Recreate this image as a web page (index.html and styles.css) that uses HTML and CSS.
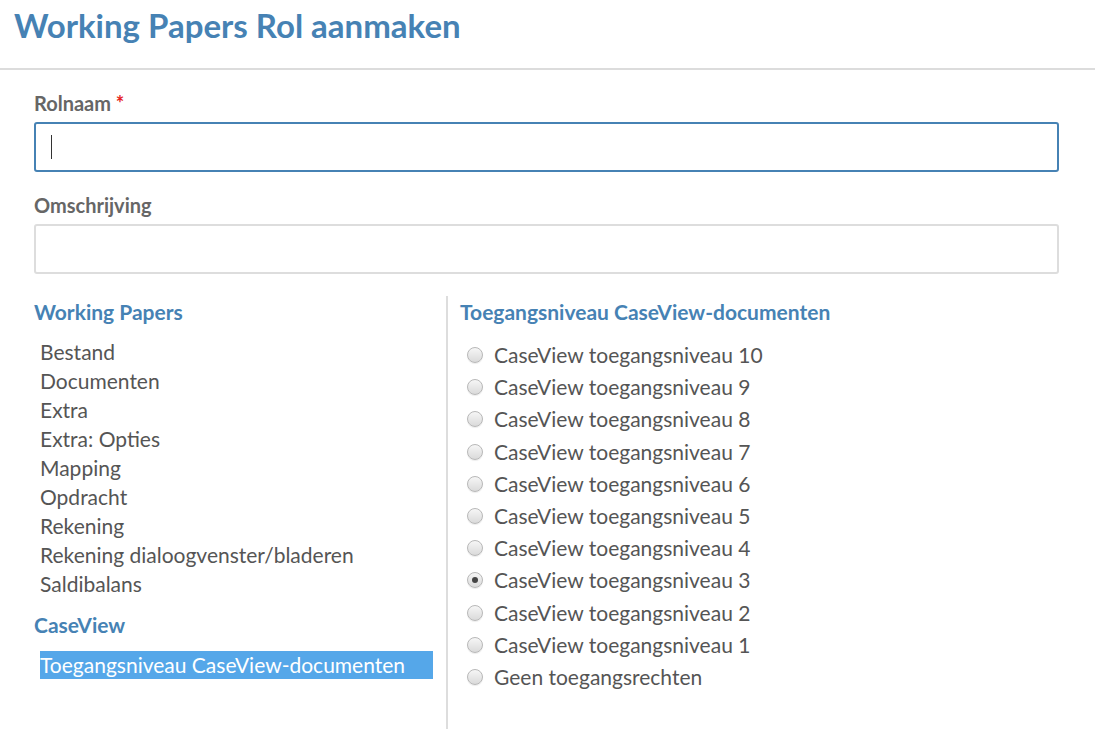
FILE: index.html
```html
<!DOCTYPE html>
<html lang="nl">
<head>
<meta charset="utf-8">
<title>Working Papers Rol aanmaken</title>
<link rel="stylesheet" href="styles.css">
</head>
<body>
<header class="page-header">
  <h1 class="page-title">Working Papers Rol aanmaken</h1>
</header>
<main class="form">
  <div class="field">
    <label class="field-label" for="rolnaam">Rolnaam <span class="req">*</span></label>
    <div class="input focused" id="rolnaam"><span class="caret"></span></div>
  </div>
  <div class="field">
    <label class="field-label" for="omschrijving">Omschrijving</label>
    <div class="input" id="omschrijving"></div>
  </div>
  <div class="columns">
    <section class="col-left">
      <h2 class="group-title">Working Papers</h2>
      <ul class="group-list">
        <li>Bestand</li>
        <li>Documenten</li>
        <li>Extra</li>
        <li>Extra: Opties</li>
        <li>Mapping</li>
        <li>Opdracht</li>
        <li>Rekening</li>
        <li>Rekening dialoogvenster/bladeren</li>
        <li>Saldibalans</li>
      </ul>
      <h2 class="group-title group-title-2">CaseView</h2>
      <ul class="group-list group-list-2">
        <li class="selected">Toegangsniveau CaseView-documenten</li>
      </ul>
    </section>
    <section class="col-right">
      <h2 class="group-title">Toegangsniveau CaseView-documenten</h2>
      <ul class="radio-list">
        <li><span class="radio"></span>CaseView toegangsniveau 10</li>
        <li><span class="radio"></span>CaseView toegangsniveau 9</li>
        <li><span class="radio"></span>CaseView toegangsniveau 8</li>
        <li><span class="radio"></span>CaseView toegangsniveau 7</li>
        <li><span class="radio"></span>CaseView toegangsniveau 6</li>
        <li><span class="radio"></span>CaseView toegangsniveau 5</li>
        <li><span class="radio"></span>CaseView toegangsniveau 4</li>
        <li><span class="radio checked"></span>CaseView toegangsniveau 3</li>
        <li><span class="radio"></span>CaseView toegangsniveau 2</li>
        <li><span class="radio"></span>CaseView toegangsniveau 1</li>
        <li><span class="radio"></span>Geen toegangsrechten</li>
      </ul>
    </section>
  </div>
</main>
</body>
</html>
```
FILE: styles.css
```css
html, body {
  margin: 0;
  padding: 0;
  background: #fff;
  font-family: Lato, "Open Sans", sans-serif;
  color: #555;
  height: 100%;
  overflow: hidden;
}

.page-header {
  border-bottom: 2px solid #dcdcdc;
  padding-left: 14px;
  box-sizing: border-box;
  height: 70px;
}

.page-title {
  margin: 0;
  padding-top: 5px;
  font-size: 33px;
  font-weight: 700;
  color: #4682b4;
  line-height: 40px;
}

.form {
  padding: 22px 0 0 34px;
  width: 1025px;
}

.field {
  margin-bottom: 22px;
}

.field-label {
  display: block;
  font-size: 20px;
  font-weight: 700;
  color: #666;
  line-height: 22px;
  margin-bottom: 8px;
}

.req {
  color: #e52222;
}

.input {
  height: 50px;
  box-sizing: border-box;
  border: 2px solid #dddddd;
  border-radius: 3px;
  display: flex;
  align-items: center;
  padding-left: 15px;
}

.input.focused {
  border-color: #4682b4;
}

.caret {
  width: 1px;
  height: 24px;
  background: #333;
}

.columns {
  display: flex;
}

.col-left {
  width: 412px;
  border-right: 2px solid #dddddd;
  min-height: 440px;
  padding-top: 4px;
}

.col-right {
  padding-left: 12px;
  padding-top: 4px;
}

.group-title {
  margin: 0;
  font-size: 21px;
  font-weight: 700;
  color: #4682b4;
  line-height: 24px;
}

.group-list {
  list-style: none;
  margin: 13px 0 0 6px;
  padding: 0;
  width: 393px;
}

.group-list li {
  font-size: 21px;
  line-height: 29px;
  color: #555;
}

.group-title-2 {
  margin-top: 15px;
}

.group-list-2 {
  margin-top: 14px;
}

.group-list li.selected {
  background: #55a7e9;
  color: #fff;
  line-height: 28px;
  height: 28px;
}

.radio-list {
  list-style: none;
  margin: 15px 0 0 7px;
  padding: 0;
}

.radio-list li {
  display: flex;
  align-items: center;
  font-size: 21px;
  line-height: 32px;
  height: 32.2px;
  color: #555;
}

.radio {
  width: 14px;
  height: 14px;
  border-radius: 50%;
  border: 1px solid #b8b8b8;
  background: linear-gradient(#f6f6f6, #dadada);
  box-shadow: 0 1px 1px rgba(0,0,0,0.08);
  margin-right: 11px;
  position: relative;
  flex-shrink: 0;
}

.radio.checked::after {
  content: "";
  position: absolute;
  left: 4px;
  top: 4px;
  width: 6px;
  height: 6px;
  border-radius: 50%;
  background: #444;
}
```
